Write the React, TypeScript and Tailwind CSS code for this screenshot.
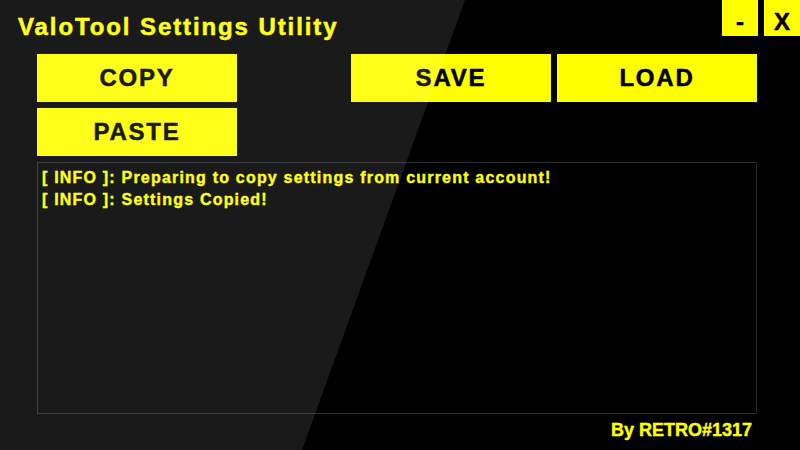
const font = { fontFamily: '"Liberation Sans", Arial, sans-serif' };

function ActionButton({ label }: { label: string }) {
  return (
    <button className="w-[200px] h-[48px] bg-[#ffff00] text-black text-[24px] font-bold tracking-[1.8px] [-webkit-text-stroke:0.5px_currentColor] flex items-center justify-center">
      {label}
    </button>
  );
}

export default function App() {
  const logs = [
    '[ INFO ]: Preparing to copy settings from current account!',
    '[ INFO ]: Settings Copied!',
  ];

  return (
    <div className="relative w-[800px] h-[450px] bg-black overflow-hidden select-none" style={font}>
      {/* Title bar */}
      <div className="flex items-start justify-between h-[54px]">
        <h1 className="pl-[18px] pt-[13px] text-[24px] leading-[28px] font-bold tracking-[1.9px] [-webkit-text-stroke:0.5px_currentColor] text-[#ffff00]">
          ValoTool Settings Utility
        </h1>
        <div className="flex gap-[6px]">
          <button className="w-[36px] h-[36px] bg-[#ffff00] text-black text-[24px] font-bold leading-none [-webkit-text-stroke:0.5px_currentColor] flex items-center justify-center pt-[8px]">
            -
          </button>
          <button className="w-[36px] h-[36px] bg-[#ffff00] text-black text-[24px] font-bold leading-none [-webkit-text-stroke:0.5px_currentColor] flex items-center justify-center pt-[8px]">
            X
          </button>
        </div>
      </div>

      {/* Buttons */}
      <div className="flex justify-between px-[37px] pr-[43px]">
        <div className="flex flex-col gap-[6px]">
          <ActionButton label="COPY" />
          <ActionButton label="PASTE" />
        </div>
        <div className="flex gap-[6px] items-start">
          <ActionButton label="SAVE" />
          <ActionButton label="LOAD" />
        </div>
      </div>

      {/* Log output */}
      <div className="ml-[37px] mt-[6px] w-[720px] h-[252px] border border-[#2b2b2b] px-[4px] pt-[4px]">
        {logs.map((line) => (
          <div key={line} className="text-[16px] leading-[22px] font-bold tracking-[1.2px] [-webkit-text-stroke:0.4px_currentColor] text-[#ffff00]">
            {line}
          </div>
        ))}
      </div>

      {/* Footer */}
      <div className="flex justify-end pr-[48px] pt-[5px]">
        <span className="text-[18px] leading-[22px] font-bold [-webkit-text-stroke:0.4px_currentColor] text-[#ffff00]">By RETRO#1317</span>
      </div>

      {/* Diagonal light overlay */}
      <div
        className="absolute inset-0 bg-white/10 pointer-events-none"
        style={{ clipPath: 'polygon(0 0, 465px 0, 302px 450px, 0 450px)' }}
      />
    </div>
  );
}
